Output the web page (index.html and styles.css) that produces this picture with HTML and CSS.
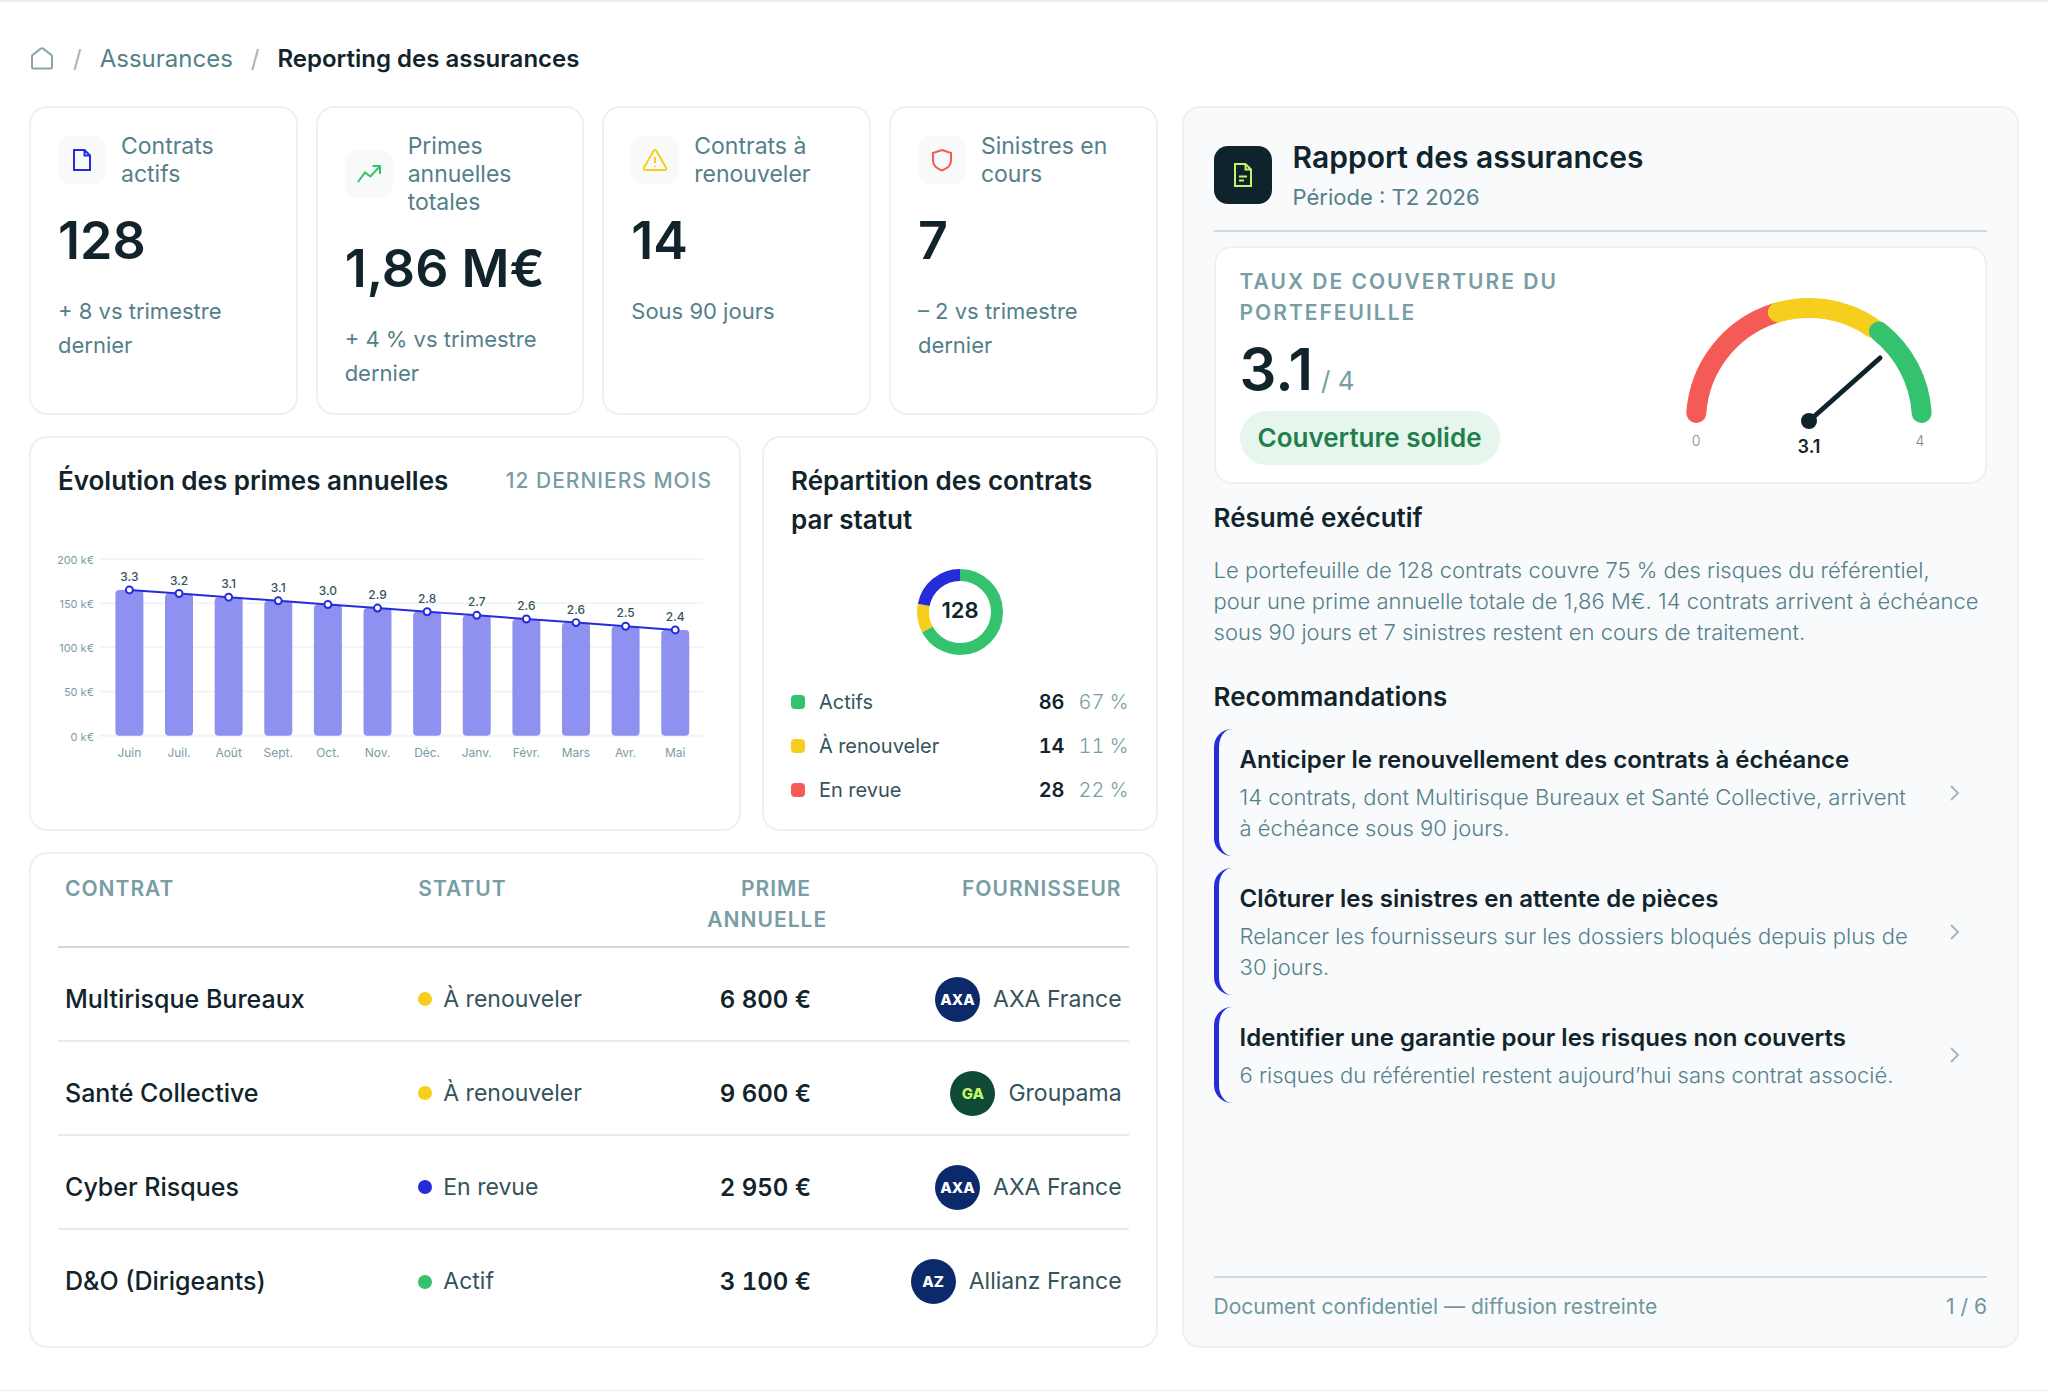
FILE: index.html
```html
<!DOCTYPE html>
<html lang="fr">
  <head>
    <meta charset="UTF-8" />
    <meta name="viewport" content="width=device-width, initial-scale=1.0" />
    <title>Reporting des assurances</title>
    <link rel="stylesheet" href="styles.css" />
  </head>
  <body>
    <nav class="breadcrumb" aria-label="Fil d'Ariane">
      <a href="#" aria-label="Accueil">
        <svg class="home" viewBox="0 0 24 24">
          <path d="M2 10.5a2 2 0 0 1 .8-1.6l8-6.3a2 2 0 0 1 2.4 0l8 6.3a2 2 0 0 1 .8 1.6V21a1.5 1.5 0 0 1-1.500 1.500h-17A1.500 1.500 0 0 1 2 21Z" />
        </svg>
      </a>
      <span class="sep">/</span>
      <a href="#">Assurances</a>
      <span class="sep">/</span>
      <span class="current" aria-current="page">Reporting des assurances</span>
    </nav>

    <main class="layout">
      <div class="main-col">
        <section class="kpis">
          <article class="card kpi">
            <div class="kpi-head">
              <span class="tile blue">
                <svg viewBox="0 0 28 28"><path d="M6 4h10.500l5.500 5.500V24H6ZM16.500 4v5.500H22" /></svg>
              </span>
              <h2>Contrats actifs</h2>
            </div>
            <p class="kpi-value">128</p>
            <p class="kpi-note">+ 8 vs trimestre dernier</p>
          </article>
          <article class="card kpi">
            <div class="kpi-head">
              <span class="tile green">
                <svg viewBox="0 0 28 28"><path d="M3 22l7-9.500 5.500 4L25 6M17.500 6H25v8" /></svg>
              </span>
              <h2>Primes annuelles totales</h2>
            </div>
            <p class="kpi-value">1,86 M€</p>
            <p class="kpi-note">+ 4 % vs trimestre dernier</p>
          </article>
          <article class="card kpi">
            <div class="kpi-head">
              <span class="tile yellow">
                <svg viewBox="0 0 28 28"><path d="M12.700 4.700a1.500 1.500 0 0 1 2.600 0l9.800 17a1.500 1.500 0 0 1-1.300 2.300H4.200a1.500 1.500 0 0 1-1.300-2.300ZM14 11v6M14 20v1" /></svg>
              </span>
              <h2>Contrats à renouveler</h2>
            </div>
            <p class="kpi-value">14</p>
            <p class="kpi-note">Sous 90 jours</p>
          </article>
          <article class="card kpi">
            <div class="kpi-head">
              <span class="tile red">
                <svg viewBox="0 0 28 28"><path d="M14 4l9 3v8c0 5-4 7.500-9 9.500-5-2-9-4.500-9-9.500V7Z" /></svg>
              </span>
              <h2>Sinistres en cours</h2>
            </div>
            <p class="kpi-value">7</p>
            <p class="kpi-note">– 2 vs trimestre dernier</p>
          </article>
        </section>

        <section class="charts">
          <article class="card chart-card">
            <header class="chart-head">
              <h2 class="card-title">Évolution des primes annuelles</h2>
              <span class="caption">12 derniers mois</span>
            </header>
            <svg class="bar-chart" id="barChart" viewBox="0 0 655 240" role="img" aria-label="Évolution des primes annuelles"></svg>
          </article>

          <article class="card chart-card">
            <h2 class="card-title">Répartition des contrats par statut</h2>
            <svg class="donut" viewBox="0 0 88 88" role="img" aria-label="128 contrats">
              <g transform="rotate(-90 44 44)">
                <circle cx="44" cy="44" r="37" pathLength="128" class="seg-green" />
                <circle cx="44" cy="44" r="37" pathLength="128" class="seg-yellow" />
                <circle cx="44" cy="44" r="37" pathLength="128" class="seg-blue" />
              </g>
              <text x="44" y="50">128</text>
            </svg>
            <ul class="legend">
              <li><i class="bg-green"></i><span>Actifs</span><b>86</b><em>67 %</em></li>
              <li><i class="bg-yellow"></i><span>À renouveler</span><b>14</b><em>11 %</em></li>
              <li><i class="bg-red"></i><span>En revue</span><b>28</b><em>22 %</em></li>
            </ul>
          </article>
        </section>

        <section class="card table-card">
          <table>
            <thead>
              <tr>
                <th class="col-contract">Contrat</th>
                <th class="col-status">Statut</th>
                <th class="col-amount">Prime annuelle</th>
                <th class="col-provider">Fournisseur</th>
              </tr>
            </thead>
            <tbody>
              <tr>
                <td class="contract">Multirisque Bureaux</td>
                <td><span class="status"><i class="bg-yellow"></i>À renouveler</span></td>
                <td class="amount">6 800 €</td>
                <td><span class="provider"><i class="logo axa">AXA</i>AXA France</span></td>
              </tr>
              <tr>
                <td class="contract">Santé Collective</td>
                <td><span class="status"><i class="bg-yellow"></i>À renouveler</span></td>
                <td class="amount">9 600 €</td>
                <td><span class="provider"><i class="logo groupama">GA</i>Groupama</span></td>
              </tr>
              <tr>
                <td class="contract">Cyber Risques</td>
                <td><span class="status"><i class="bg-blue"></i>En revue</span></td>
                <td class="amount">2 950 €</td>
                <td><span class="provider"><i class="logo axa">AXA</i>AXA France</span></td>
              </tr>
              <tr>
                <td class="contract">D&amp;O (Dirigeants)</td>
                <td><span class="status"><i class="bg-green"></i>Actif</span></td>
                <td class="amount">3 100 €</td>
                <td><span class="provider"><i class="logo axa">AZ</i>Allianz France</span></td>
              </tr>
            </tbody>
          </table>
        </section>
      </div>

      <aside class="report">
        <header class="report-head">
          <span class="report-icon">
            <svg viewBox="0 0 28 28"><path d="M6 3h10.500l5.500 5.500V25H6ZM16.500 3v5.500H22M10 15.500h8M10 19.500h5" /></svg>
          </span>
          <div>
            <h1>Rapport des assurances</h1>
            <p>Période : T2 2026</p>
          </div>
        </header>

        <section class="rate">
          <div>
            <h2>Taux de couverture du portefeuille</h2>
            <p class="rate-value">3.1<small>/ 4</small></p>
            <p class="pill">Couverture solide</p>
          </div>
          <svg class="gauge" viewBox="0 0 304 200" role="img" aria-label="3.1 sur 4">
            <path class="arc arc-red" d="M39.300 148A113 113 0 0 1 117 48.400" />
            <path class="arc arc-yellow" d="M120.800 47.300A113 113 0 0 1 216 63" />
            <path class="arc arc-green" d="M222 66.500A113 113 0 0 1 264.700 148" />
            <path class="needle" d="M152 156L223 93" />
            <circle cx="152" cy="156" r="8" />
            <text class="tick" x="39" y="181">0</text>
            <text class="tick" x="263" y="181">4</text>
            <text class="mark" x="152" y="188">3.1</text>
          </svg>
        </section>

        <h2 class="report-title">Résumé exécutif</h2>
        <p class="summary">
          Le portefeuille de 128 contrats couvre 75 % des risques du référentiel,<br />
          pour une prime annuelle totale de 1,86 M€. 14 contrats arrivent à échéance<br />
          sous 90 jours et 7 sinistres restent en cours de traitement.
        </p>

        <h2 class="report-title">Recommandations</h2>
        <ul class="reco">
          <li>
            <a href="#">
              <span>
                <strong>Anticiper le renouvellement des contrats à échéance</strong>
                14 contrats, dont Multirisque Bureaux et Santé Collective, arrivent à échéance sous 90 jours.
              </span>
              <svg viewBox="0 0 16 16"><path d="M4 1l7 7-7 7" /></svg>
            </a>
          </li>
          <li>
            <a href="#">
              <span>
                <strong>Clôturer les sinistres en attente de pièces</strong>
                Relancer les fournisseurs sur les dossiers bloqués depuis plus de 30 jours.
              </span>
              <svg viewBox="0 0 16 16"><path d="M4 1l7 7-7 7" /></svg>
            </a>
          </li>
          <li>
            <a href="#">
              <span>
                <strong>Identifier une garantie pour les risques non couverts</strong>
                6 risques du référentiel restent aujourd’hui sans contrat associé.
              </span>
              <svg viewBox="0 0 16 16"><path d="M4 1l7 7-7 7" /></svg>
            </a>
          </li>
        </ul>

        <footer class="report-foot">
          <span>Document confidentiel — diffusion restreinte</span>
          <span>1 / 6</span>
        </footer>
      </aside>
    </main>

    <script>
      const months = ["Juin", "Juil.", "Août", "Sept.", "Oct.", "Nov.", "Déc.", "Janv.", "Févr.", "Mars", "Avr.", "Mai"];
      const rates = ["3.3", "3.2", "3.1", "3.1", "3.0", "2.9", "2.8", "2.7", "2.6", "2.6", "2.5", "2.4"];
      const base = 203;
      const step = 49.7;
      let grid = "";
      let bars = "";
      let dots = "";
      const points = [];

      // horizontal lines, 0 to 200 k€
      for (let i = 0; i <= 4; i++) {
        const y = base - i * 44.25;
        grid += `<line x1="41" x2="646" y1="${y}" y2="${y}" />`;
        grid += `<text class="axis" x="36" y="${y + 5}">${i * 50} k€</text>`;
      }

      months.forEach((month, i) => {
        const x = 71.5 + i * step;
        const y = 57 + i * 3.64;
        points.push(`${x},${y}`);
        bars += `<rect x="${x - 14}" y="${y}" width="28" height="${base - y}" rx="4" />`;
        bars += `<text class="month" x="${x}" y="224">${month}</text>`;
        dots += `<circle cx="${x}" cy="${y}" r="3.5" />`;
        dots += `<text class="rate-label" x="${x}" y="${y - 9}">${rates[i]}</text>`;
      });

      document.getElementById("barChart").innerHTML =
        grid + bars + `<polyline points="${points.join(" ")}" />` + dots;
    </script>
  </body>
</html>
```
FILE: styles.css
```css
* {
  margin: 0;
  padding: 0;
  box-sizing: border-box;
}

:root {
  --dark: #12242b;
  --text: #34535c;
  --teal: #54808a;
  --soft: #789da4;
  --line: #eef0f1;
  --rule: #d3dadd;
  --blue: #272cdb;
  --green: #35c26e;
  --yellow: #f5ce1e;
  --red: #f45b57;
}

body {
  min-height: 100vh;
  display: flex;
  flex-direction: column;
  padding: 38px 29px 42px;
  border-top: 2px solid #ededed;
  border-bottom: 2px solid #ededed;
  background: #fff;
  color: var(--dark);
  font-family: "Inter", sans-serif;
  font-size: 22px;
  line-height: 31px;
}

ul {
  list-style: none;
}

i,
em {
  font-style: normal;
}

a {
  color: inherit;
  text-decoration: none;
}

svg {
  fill: none;
  flex-shrink: 0;
}

.bg-green {
  background: var(--green);
}
.bg-yellow {
  background: var(--yellow);
}
.bg-red {
  background: var(--red);
}
.bg-blue {
  background: var(--blue);
}

.breadcrumb {
  display: flex;
  align-items: center;
  gap: 18px;
  height: 36px;
  margin-bottom: 30px;
  font-size: 24px;
  color: var(--teal);
}

.breadcrumb .home {
  display: block;
  width: 26px;
  height: 24px;
  stroke: #8ba6ab;
  stroke-width: 2;
}

.breadcrumb .sep {
  color: #a9b4b7;
}

.breadcrumb .current {
  color: var(--dark);
  font-weight: 600;
}

.layout {
  flex: 1;
  display: grid;
  grid-template-columns: 1128fr 837fr;
  gap: 24px;
}

.main-col {
  display: flex;
  flex-direction: column;
  gap: 21px;
  min-width: 0;
}

.card {
  border: 2px solid var(--line);
  border-radius: 18px;
  background: #fff;
}

/* indicateurs */
.kpis {
  display: grid;
  grid-template-columns: repeat(4, 1fr);
  gap: 18px;
}

.kpi {
  padding: 24px 24px 23px 27px;
}

.kpi-head {
  display: flex;
  align-items: center;
  gap: 15px;
}

.tile {
  display: grid;
  place-items: center;
  flex-shrink: 0;
  width: 48px;
  height: 48px;
  border-radius: 12px;
  background: #f8fafa;
}

.tile svg {
  width: 28px;
  height: 28px;
  stroke: currentColor;
  stroke-width: 2;
}

.blue {
  color: var(--blue);
}
.green {
  color: var(--green);
}
.yellow {
  color: var(--yellow);
}
.red {
  color: var(--red);
}

.kpi h2 {
  font-size: 23px;
  font-weight: 400;
  line-height: 28px;
  color: var(--teal);
}

.kpi-value {
  margin: 22px 0;
  font-size: 52px;
  font-weight: 600;
  line-height: 62px;
  white-space: nowrap;
}

.kpi-note {
  line-height: 34px;
  color: var(--teal);
}

/* graphiques */
.charts {
  display: grid;
  grid-template-columns: 711fr 395fr;
  gap: 21px;
}

.chart-card {
  display: flex;
  flex-direction: column;
  padding: 23px 27px 23px;
  min-width: 0;
}

.chart-head {
  display: flex;
  justify-content: space-between;
  align-items: center;
}

.card-title {
  font-size: 26px;
  font-weight: 600;
  line-height: 39px;
}

.caption {
  font-size: 21px;
  font-weight: 500;
  letter-spacing: 1px;
  text-transform: uppercase;
  color: var(--soft);
}

.bar-chart {
  width: 100%;
  margin: auto 0;
}

.bar-chart line {
  stroke: #f1f3f4;
  stroke-width: 2;
}

.bar-chart rect {
  fill: #8e91ef;
}

.bar-chart polyline {
  stroke: var(--blue);
  stroke-width: 2;
}

.bar-chart circle {
  fill: #fff;
  stroke: var(--blue);
  stroke-width: 2;
}

.bar-chart text {
  font-size: 12px;
  text-anchor: middle;
  fill: var(--soft);
}

.bar-chart .axis {
  font-size: 11px;
  text-anchor: end;
}

.bar-chart .rate-label {
  font-weight: 500;
  fill: var(--text);
}

.donut {
  width: 88px;
  height: 88px;
  margin: 29px auto 30px;
}

.donut circle {
  stroke-width: 12;
}

.donut .seg-green {
  stroke: var(--green);
  stroke-dasharray: 86 42;
}

.donut .seg-yellow {
  stroke: var(--yellow);
  stroke-dasharray: 14 114;
  stroke-dashoffset: -86;
}

.donut .seg-blue {
  stroke: var(--blue);
  stroke-dasharray: 28 100;
  stroke-dashoffset: -100;
}

.donut text {
  font-size: 22px;
  font-weight: 600;
  text-anchor: middle;
  fill: var(--dark);
}

.legend {
  display: grid;
  gap: 12px;
}

.legend li {
  display: flex;
  align-items: center;
  gap: 14px;
  font-size: 20px;
  line-height: 32px;
  font-variant-numeric: tabular-nums;
  color: var(--text);
}

.legend i {
  width: 14px;
  height: 14px;
  border-radius: 4px;
}

.legend span {
  flex: 1;
}

.legend b {
  font-weight: 600;
  color: var(--dark);
}

.legend em {
  font-weight: 300;
  color: var(--soft);
}

/* tableau des contrats */
.table-card {
  padding: 19px 27px 23px;
}

table {
  width: 100%;
  table-layout: fixed;
  border-collapse: collapse;
}

th {
  padding: 0 7px 11px;
  font-size: 21px;
  font-weight: 600;
  letter-spacing: 1px;
  text-align: left;
  text-transform: uppercase;
  vertical-align: top;
  color: var(--soft);
}

.col-contract {
  width: 33%;
}
.col-status {
  width: 27%;
}
.col-amount {
  width: 11%;
  text-align: right;
}
.col-provider {
  width: 29%;
  text-align: right;
}

thead tr {
  border-bottom: 2px solid var(--rule);
}

tbody tr + tr {
  border-top: 2px solid #e8ebec;
}

td {
  height: 94px;
  padding: 10px 7px 0;
  font-size: 23px;
  color: var(--text);
}

.contract {
  font-size: 25px;
  font-weight: 500;
  color: var(--dark);
}

.amount {
  font-size: 24px;
  font-weight: 600;
  font-variant-numeric: tabular-nums;
  text-align: right;
  white-space: nowrap;
  color: var(--dark);
}

.status {
  display: flex;
  align-items: center;
  gap: 11px;
}

.status i {
  width: 14px;
  height: 14px;
  border-radius: 50%;
}

.provider {
  display: flex;
  align-items: center;
  justify-content: flex-end;
  gap: 13px;
}

.logo {
  display: grid;
  place-items: center;
  width: 45px;
  height: 45px;
  border-radius: 50%;
  font-size: 15px;
  font-weight: 800;
}

.axa {
  background: #0c2a6b;
  color: #fff;
}

.groupama {
  background: #0f4a36;
  color: #c3f56c;
}

/* rapport */
.report {
  display: flex;
  flex-direction: column;
  padding: 27px 30px 24px;
  border: 2px solid var(--line);
  border-radius: 18px;
  background: #f8fafb;
}

.report-head {
  display: flex;
  align-items: center;
  gap: 21px;
  padding-bottom: 15px;
  margin-bottom: 14px;
  border-bottom: 2px solid var(--rule);
}

.report-icon {
  display: grid;
  place-items: center;
  width: 58px;
  height: 58px;
  border-radius: 14px;
  background: #0f232c;
}

.report-icon svg {
  width: 28px;
  height: 28px;
  stroke: #c3f56c;
  stroke-width: 2;
}

.report-head h1 {
  font-size: 30px;
  font-weight: 600;
  line-height: 44px;
}

.report-head p {
  font-size: 22px;
  line-height: 36px;
  color: var(--teal);
}

.rate {
  display: flex;
  justify-content: space-between;
  align-items: center;
  gap: 24px;
  padding: 17px 24px;
  border: 2px solid var(--line);
  border-radius: 18px;
  background: #fff;
}

.rate h2 {
  max-width: 340px;
  font-size: 21px;
  font-weight: 600;
  letter-spacing: 2px;
  text-transform: uppercase;
  color: var(--soft);
}

.rate-value {
  margin: 6px 0;
  font-size: 58px;
  font-weight: 600;
  line-height: 71px;
}

.rate-value small {
  margin-left: 8px;
  font-size: 26px;
  font-weight: 400;
  line-height: 26px;
  color: var(--soft);
}

.pill {
  width: fit-content;
  padding: 0 18px;
  border-radius: 27px;
  background: #e6f6ec;
  color: #1f7f4d;
  font-size: 26px;
  font-weight: 600;
  line-height: 54px;
}

.gauge {
  width: 304px;
  height: 200px;
}

.arc {
  stroke-width: 20;
  stroke-linecap: round;
}
.arc-red {
  stroke: var(--red);
}
.arc-yellow {
  stroke: var(--yellow);
}
.arc-green {
  stroke: var(--green);
}

.needle {
  stroke: #0f232c;
  stroke-width: 5;
  stroke-linecap: round;
}

.gauge circle {
  fill: #0f232c;
}

.gauge text {
  text-anchor: middle;
}

.gauge .tick {
  font-size: 14px;
  font-weight: 300;
  fill: #7d8688;
}

.gauge .mark {
  font-size: 18px;
  font-weight: 600;
  fill: var(--dark);
}

.report-title {
  margin-top: 15px;
  font-size: 26px;
  font-weight: 600;
  line-height: 38px;
}

.summary {
  margin: 18px 0 15px;
  font-weight: 300;
  color: var(--teal);
}

.reco {
  display: grid;
  gap: 12px;
  margin-top: 13px;
}

.reco a {
  display: flex;
  align-items: center;
  gap: 24px;
  padding: 12px 24px 12px 21px;
  border-left: 5px solid var(--blue);
  border-radius: 18px;
  font-weight: 300;
  color: var(--teal);
}

.reco span {
  flex: 1;
}

.reco strong {
  display: block;
  margin-bottom: 3px;
  font-size: 24px;
  font-weight: 600;
  line-height: 38px;
  color: var(--dark);
}

.reco svg {
  width: 16px;
  height: 16px;
  stroke: #a9b8bc;
  stroke-width: 2;
}

.report-foot {
  display: flex;
  justify-content: space-between;
  margin-top: auto;
  padding-top: 13px;
  border-top: 2px solid var(--rule);
  font-size: 21px;
  color: #6f979d;
}
```
